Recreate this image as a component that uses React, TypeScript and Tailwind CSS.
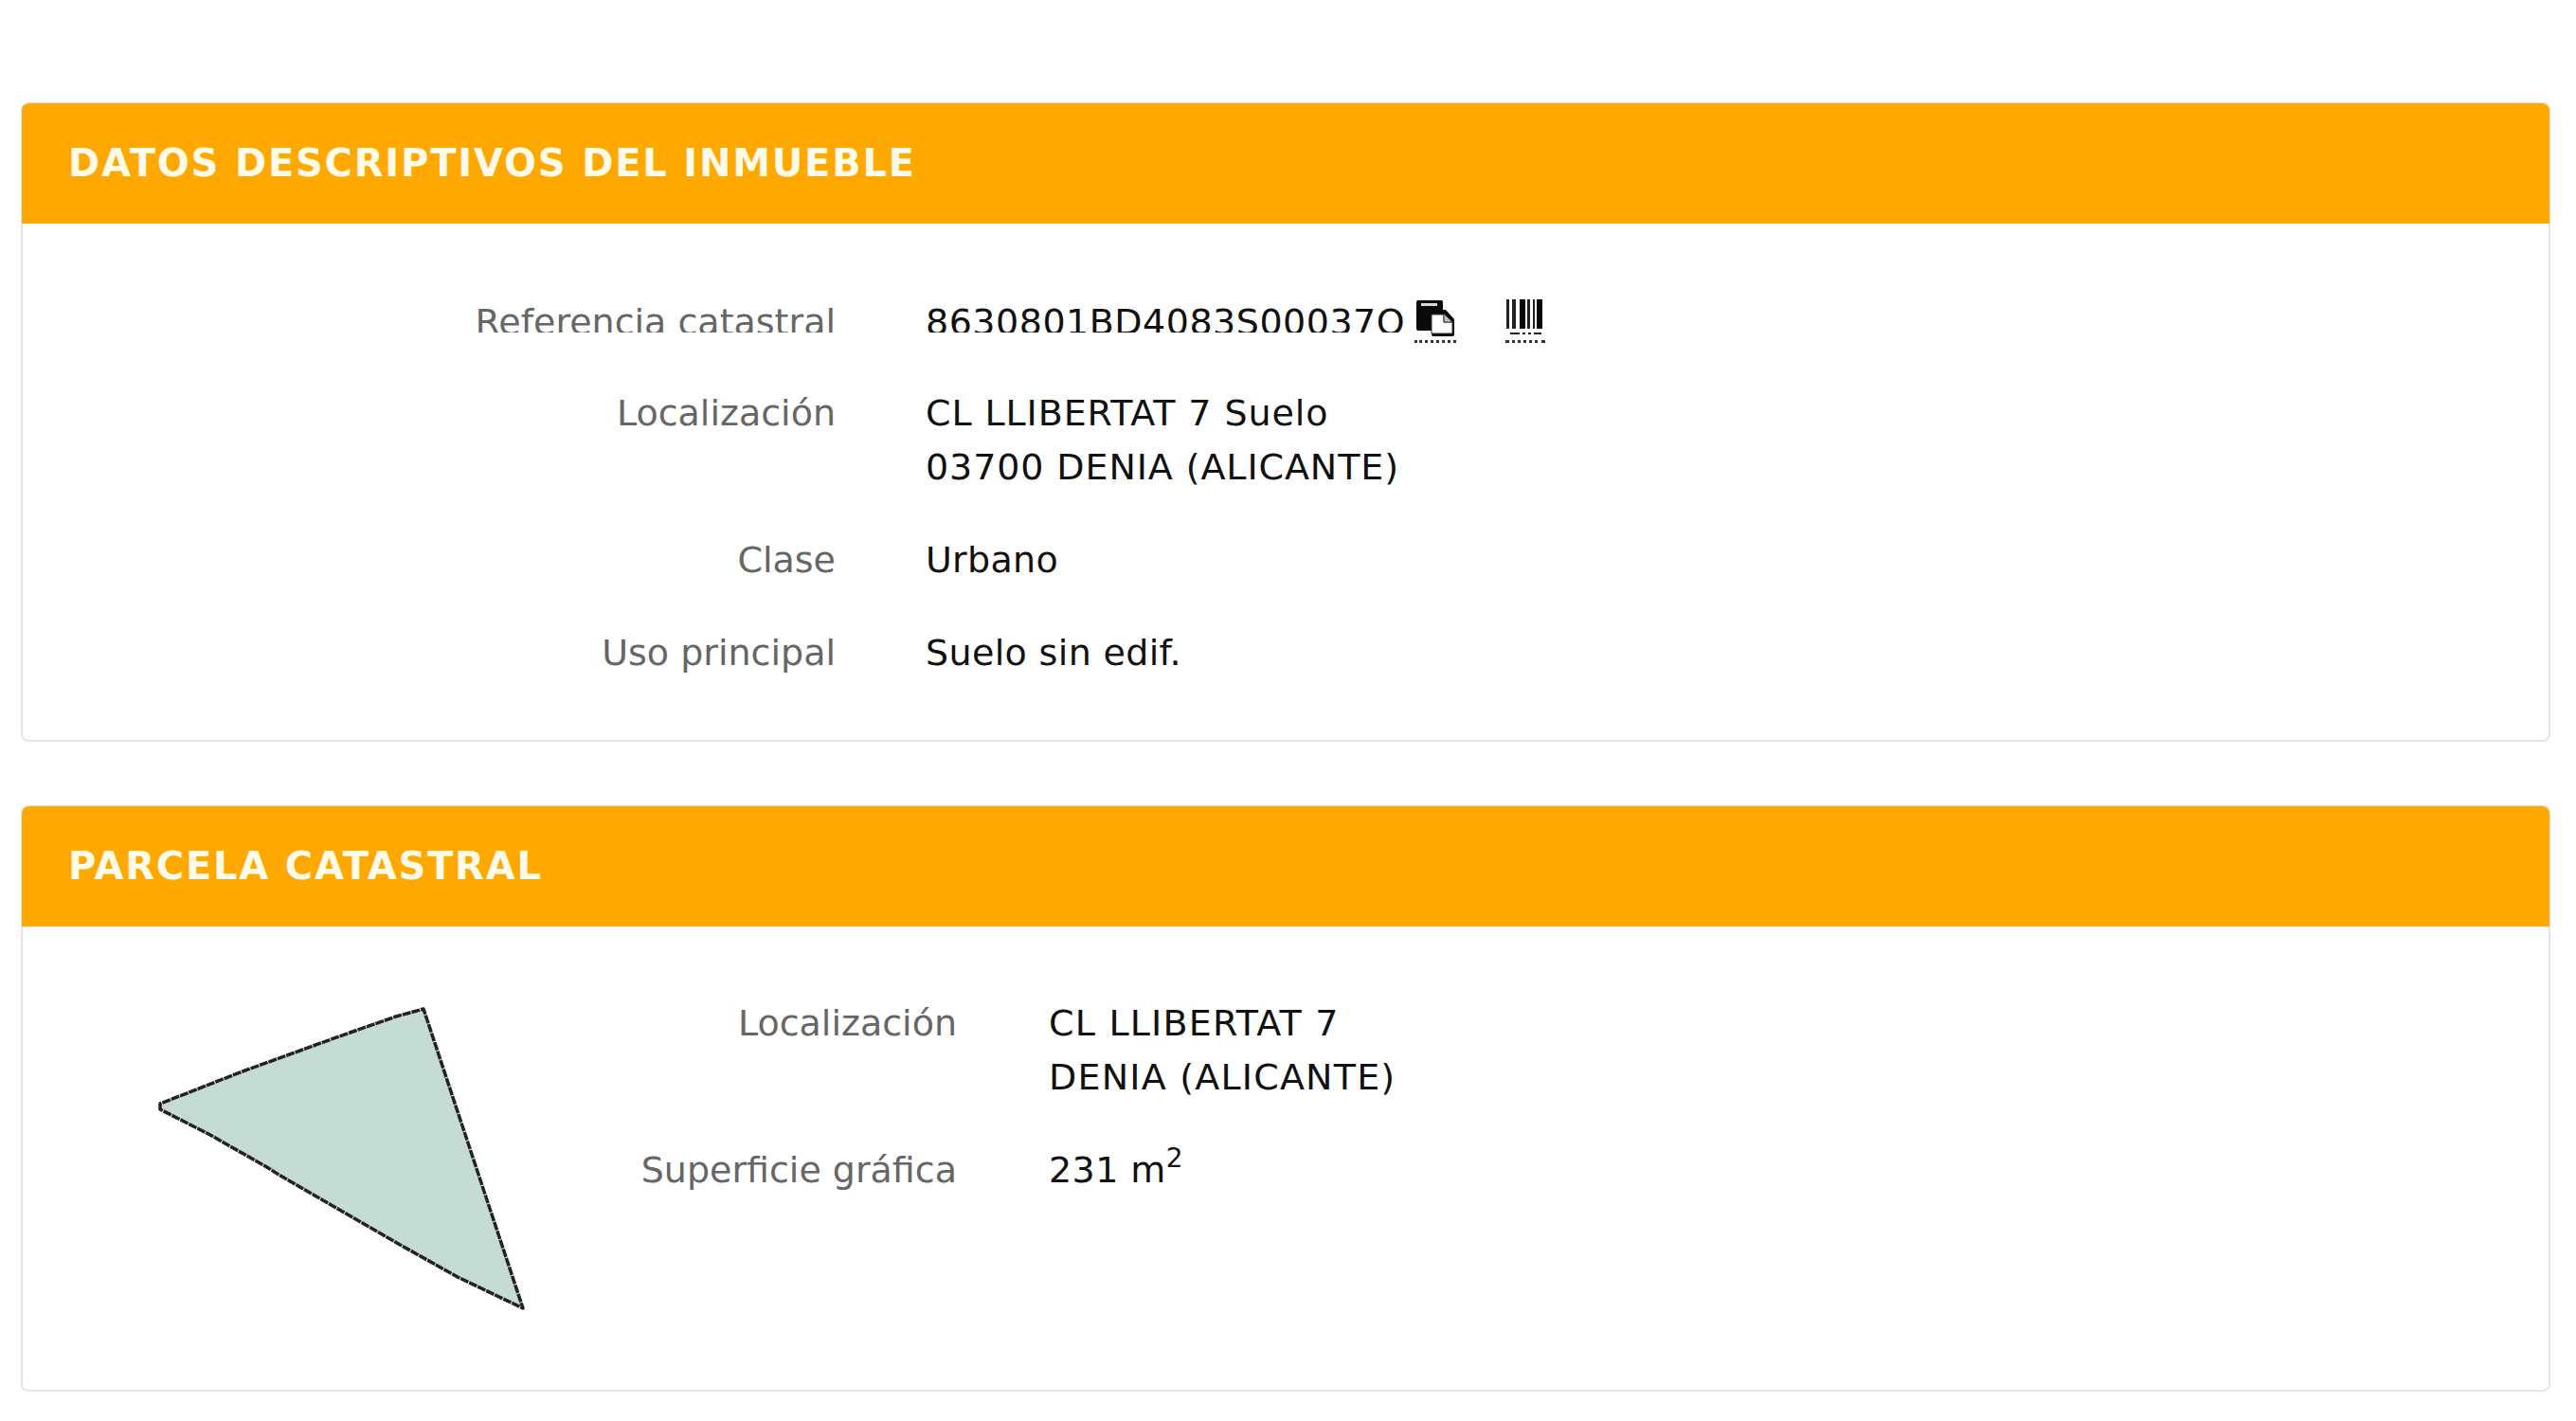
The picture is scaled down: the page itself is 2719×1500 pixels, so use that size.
import React from 'react';

const CopyIcon = () => (
  <svg width="44" height="40" viewBox="0 0 44 40" className="block">
    <path d="M2 3 a2 2 0 0 1 2-2 h24 a2 2 0 0 1 2 2 v8 h3 l9 10 v16 a2 2 0 0 1-2 2 h-20 a2 2 0 0 1-2-2 v-4 h-14 a2 2 0 0 1-2-2 z" fill="#0a0a0a" />
    <rect x="7" y="4" width="17" height="3" fill="#d8d8d8" />
    <path d="M18 16 h13 v8 h9 v12 h-22 z" fill="#fff" stroke="#333" strokeWidth="1" />
    <path d="M31 15 l9 9 h-9 z" fill="#bdbdbd" stroke="#333" strokeWidth="1" />
  </svg>
);

const BarcodeIcon = () => (
  <svg width="42" height="40" viewBox="0 0 42 40" className="block">
    <rect x="1" y="0" width="3" height="31" fill="#222" />
    <rect x="7" y="0" width="4" height="31" fill="#222" />
    <rect x="15" y="0" width="6" height="31" fill="#0a0a0a" />
    <rect x="23" y="0" width="3" height="31" fill="#222" />
    <rect x="29" y="0" width="2" height="31" fill="#222" />
    <rect x="33" y="0" width="6" height="31" fill="#0a0a0a" />
    <rect x="5" y="35" width="10" height="2" fill="#222" />
    <rect x="18" y="35" width="3" height="2" fill="#222" />
    <rect x="24" y="35" width="3" height="2" fill="#222" />
    <rect x="30" y="35" width="8" height="2" fill="#222" />
  </svg>
);

const Parcel = () => (
  <svg width="420" height="350" viewBox="160 1050 420 350" className="block">
    <polygon
      points="169,1164 169,1170 220,1196 280,1230 296,1240 353,1273 417,1310 483,1347 552,1380 447,1064 418,1072 358,1093 256,1130"
      fill="#c5dcd5"
      stroke="#222"
      strokeWidth="3.5"
      strokeLinejoin="round"
      strokeDasharray="9 1"
    />
  </svg>
);

const Card = ({ title, bodyClass, children }: { title: string; bodyClass: string; children: React.ReactNode }) => (
  <section className="rounded-lg border-2 border-[#e4e4e4] bg-white">
    <h2 className="-m-[1px] flex h-[127px] items-center rounded-t-lg bg-[#ffa800] pl-[49px] text-[40px] font-bold tracking-[1.8px] text-[#fffbe8]">
      {title}
    </h2>
    <div className={bodyClass}>{children}</div>
  </section>
);

export default function App() {
  return (
    <div className="h-[1500px] overflow-hidden bg-white pt-[108px] pr-[27px] pl-[22px] font-['DejaVu_Sans','Liberation_Sans',sans-serif] text-[38px] leading-[57px] text-[#111]">
      <Card title="DATOS DESCRIPTIVOS DEL INMUEBLE" bodyClass="h-[546px] pt-[77px]">
        <div className="grid grid-cols-[858px_1fr] gap-x-[95px] gap-y-[41px]">
          <div className="h-[55px]">
            <div className="h-[39px] overflow-hidden text-right text-[#666]">Referencia catastral</div>
          </div>
          <div className="relative h-[55px]">
            <div className="h-[39px] overflow-hidden tracking-[0.5px]">8630801BD4083S00037O</div>
            <div className="absolute top-[4px] left-[516px] border-b-[3px] border-dotted border-[#333] pb-[3px]">
              <CopyIcon />
            </div>
            <div className="absolute top-[4px] left-[612px] border-b-[3px] border-dotted border-[#333] pb-[3px]">
              <BarcodeIcon />
            </div>
          </div>
          <div className="text-right text-[#666]">Localización</div>
          <div className="tracking-[0.9px]">
            CL LLIBERTAT 7 Suelo
            <br />
            03700 DENIA (ALICANTE)
          </div>
          <div className="text-right text-[#666]">Clase</div>
          <div className="tracking-[0.3px]">Urbano</div>
          <div className="text-right text-[#666]">Uso principal</div>
          <div className="tracking-[0.35px]">Suelo sin edif.</div>
        </div>
      </Card>
      <div className="h-[67px]" />
      <Card title="PARCELA CATASTRAL" bodyClass="relative flex h-[490px] pt-[75px]">
        <div className="absolute top-[74px] left-[136px]">
          <Parcel />
        </div>
        <div className="grid grid-cols-[986px_1fr] content-start gap-x-[97px] gap-y-[41px]">
          <div className="text-right text-[#666]">Localización</div>
          <div className="tracking-[1.2px]">
            CL LLIBERTAT 7
            <br />
            DENIA (ALICANTE)
          </div>
          <div className="text-right text-[#666]">Superficie gráfica</div>
          <div className="tracking-[0.4px]">
            231 m<sup className="relative -top-[2px] align-super text-[28px] leading-none">2</sup>
          </div>
        </div>
      </Card>
    </div>
  );
}
